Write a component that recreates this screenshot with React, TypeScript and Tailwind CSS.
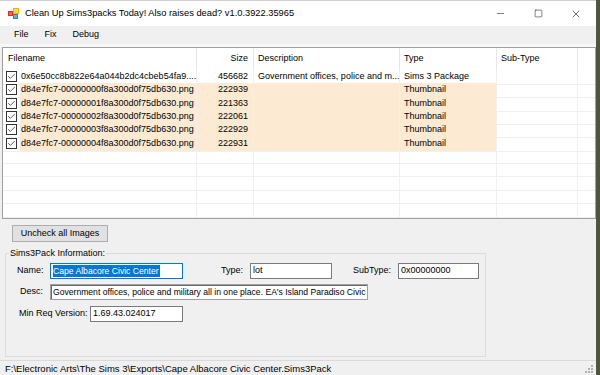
import { Check, Minus, Square, X } from 'lucide-react';

interface FileRow {
  name: string;
  size: string;
  desc: string;
  type: string;
  thumb: boolean;
}

const rows: FileRow[] = [
  { name: '0x6e50cc8b822e64a044b2dc4cbeb54fa9....', size: '456682', desc: 'Government offices, police and m...', type: 'Sims 3 Package', thumb: false },
  { name: 'd84e7fc7-00000000f8a300d0f75db630.png', size: '222939', desc: '', type: 'Thumbnail', thumb: true },
  { name: 'd84e7fc7-00000001f8a300d0f75db630.png', size: '221363', desc: '', type: 'Thumbnail', thumb: true },
  { name: 'd84e7fc7-00000002f8a300d0f75db630.png', size: '222061', desc: '', type: 'Thumbnail', thumb: true },
  { name: 'd84e7fc7-00000003f8a300d0f75db630.png', size: '222929', desc: '', type: 'Thumbnail', thumb: true },
  { name: 'd84e7fc7-00000004f8a300d0f75db630.png', size: '222931', desc: '', type: 'Thumbnail', thumb: true },
];

const grid = 'grid grid-cols-[17px_177px_57px_146px_97px_81px_1fr]';

const AppIcon = () => (
  <svg width="11" height="11" viewBox="0 0 11 11">
    <rect x="5" y="0" width="6" height="6" fill="#f5b300" />
    <rect x="6" y="1" width="4" height="4" fill="#ffd64a" />
    <rect x="0" y="3" width="5" height="5" fill="#d9342b" />
    <rect x="1" y="4" width="3" height="3" fill="#f0643a" />
    <rect x="5" y="6" width="5" height="5" fill="#3b7fd0" />
    <rect x="6" y="7" width="3" height="3" fill="#6fa8e8" />
  </svg>
);

const CheckBox = () => (
  <div className="w-[11px] h-[11px] border border-[#333] bg-white flex items-center justify-center">
    <Check size={9} strokeWidth={2} color="#222" />
  </div>
);

const TextBox = ({ width, children, focused = false, sunken = false }: { width: string; children: React.ReactNode; focused?: boolean; sunken?: boolean }) => (
  <div
    className={`${width} h-[16px] bg-white flex items-center pl-[2px] overflow-hidden whitespace-nowrap ${
      focused ? 'border border-[#0078d7]' : sunken ? 'border border-[#a0a0a0] shadow-[inset_1px_1px_0_#696969]' : 'border border-[#7a7a7a]'
    }`}
  >
    {children}
  </div>
);

const App = () => {
  return (
    <div className="w-[600px] h-[375px] flex bg-[#3f4a2a] text-[9px] text-black" style={{ fontFamily: '"Liberation Sans", Arial, sans-serif' }}>
      <div className="w-[597px] h-full flex flex-col bg-[#f0f0f0] border-r border-[#555]">
        {/* Title bar */}
        <div className="h-[26px] bg-white flex items-center border-t border-[#cfcfcf] shrink-0">
          <div className="ml-[8px] mr-[6px] flex items-center">
            <AppIcon />
          </div>
          <span className="text-[9.3px]">Clean Up Sims3packs Today! Also raises dead? v1.0.3922.35965</span>
          <div className="ml-auto flex h-full pr-[1px]">
            <div className="w-[37px] flex items-center justify-center">
              <Minus size={11} strokeWidth={1.1} />
            </div>
            <div className="w-[38px] flex items-center justify-center">
              <Square size={9} strokeWidth={1.3} />
            </div>
            <div className="w-[38px] flex items-center justify-center">
              <X size={12} strokeWidth={1.1} />
            </div>
          </div>
        </div>

        {/* Menu */}
        <div className="h-[18px] flex items-center pl-[14px] gap-[16px] shrink-0">
          <span>File</span>
          <span>Fix</span>
          <span>Debug</span>
        </div>
        <div className="h-[3px] bg-[#f7f7f7] shrink-0" />

        {/* List view */}
        <div className="h-[172px] ml-[2px] border border-[#a0a0a0] bg-white overflow-hidden shrink-0">
          <div className={`${grid} h-[22px] items-center`}>
            <div className="col-span-2 h-full flex items-center pl-[5px] border-r border-[#e5e5e5]">Filename</div>
            <div className="h-full flex items-center justify-end pr-[5px] border-r border-[#e5e5e5]">Size</div>
            <div className="h-full flex items-center pl-[4px] border-r border-[#e5e5e5]">Description</div>
            <div className="h-full flex items-center pl-[4px] border-r border-[#e5e5e5]">Type</div>
            <div className="h-full flex items-center pl-[4px] border-r border-[#e5e5e5]">Sub-Type</div>
            <div />
          </div>
          {rows.map((r, i) => (
            <div key={i} className={`${grid} ${i % 3 === 1 ? 'h-[14px]' : 'h-[13px]'} whitespace-nowrap`}>
              <div className="flex items-center pl-[3px] border-b border-[#f0f0f0]">
                <CheckBox />
              </div>
              <div className={`flex items-center pl-[1px] border-b border-r border-[#f0f0f0] overflow-hidden ${r.thumb ? 'bg-[#fdead3]' : ''}`}>{r.name}</div>
              <div className={`flex items-center justify-end pr-[5px] border-b border-r border-[#f0f0f0] ${r.thumb ? 'bg-[#fdead3]' : ''}`}>{r.size}</div>
              <div className={`flex items-center pl-[4px] border-b border-r border-[#f0f0f0] overflow-hidden ${r.thumb ? 'bg-[#fdead3]' : ''}`}>{r.desc}</div>
              <div className={`flex items-center pl-[4px] border-b border-r border-[#f0f0f0] ${r.thumb ? 'bg-[#fdead3]' : ''}`}>{r.type}</div>
              <div className="border-b border-r border-[#f0f0f0]" />
              <div className="border-b border-[#f0f0f0]" />
            </div>
          ))}
          {[0, 1, 2, 3, 4].map((i) => (
            <div key={i} className={`${grid} h-[13.6px]`}>
              <div className="border-b border-[#f0f0f0]" />
              <div className="border-b border-r border-[#f0f0f0]" />
              <div className="border-b border-r border-[#f0f0f0]" />
              <div className="border-b border-r border-[#f0f0f0]" />
              <div className="border-b border-r border-[#f0f0f0]" />
              <div className="border-b border-r border-[#f0f0f0]" />
              <div className="border-b border-[#f0f0f0]" />
            </div>
          ))}
        </div>

        {/* Bottom panel */}
        <div className="flex-1 flex flex-col">
          <button className="ml-[12px] mt-[6px] w-[96px] h-[17px] bg-[#e1e1e1] border border-[#adadad] text-[9px] flex items-center justify-center">
            Uncheck all Images
          </button>
          <fieldset className="ml-[5px] mt-[6px] w-[481px] h-[109px] border border-[#dcdcdc]">
            <legend className="ml-[3px] px-[1px] leading-[11px]">Sims3Pack Information:</legend>
            <div className="flex items-center mt-[4px]">
              <span className="ml-[11px] w-[33px]">Name:</span>
              <TextBox width="w-[133px]" focused>
                <span className="bg-[#0078d7] text-white text-[8.6px] pr-[1px]">Cape Albacore Civic Center</span>
              </TextBox>
              <span className="ml-[38px] w-[29px]">Type:</span>
              <TextBox width="w-[82px]">lot</TextBox>
              <span className="ml-[21px] w-[45px]">SubType:</span>
              <TextBox width="w-[81px]">0x00000000</TextBox>
            </div>
            <div className="flex items-center mt-[5px]">
              <span className="ml-[14px] w-[30px]">Desc:</span>
              <TextBox width="w-[318px]" sunken>
                <span className="text-[8.6px]">Government offices, police and military all in one place. EA's Island Paradiso Civic Center</span>
              </TextBox>
            </div>
            <div className="flex items-center mt-[6px]">
              <span className="ml-[13px] w-[71px]">Min Req Version:</span>
              <TextBox width="w-[93px]">1.69.43.024017</TextBox>
            </div>
          </fieldset>
        </div>

        {/* Status bar */}
        <div className="h-[15px] border-t border-[#dadada] flex items-center pl-[5px] pt-[2px] shrink-0 relative">
          <span className="text-[9.5px]">F:\Electronic Arts\The Sims 3\Exports\Cape Albacore Civic Center.Sims3Pack</span>
          <div className="absolute right-[3px] bottom-[2px] grid grid-cols-3 gap-[1px]">
            <span />
            <span />
            <span className="w-[2px] h-[2px] bg-[#b0b0b0]" />
            <span />
            <span className="w-[2px] h-[2px] bg-[#b0b0b0]" />
            <span className="w-[2px] h-[2px] bg-[#b0b0b0]" />
            <span className="w-[2px] h-[2px] bg-[#b0b0b0]" />
            <span className="w-[2px] h-[2px] bg-[#b0b0b0]" />
            <span className="w-[2px] h-[2px] bg-[#b0b0b0]" />
          </div>
        </div>
      </div>
      <div className="flex-1 bg-[#4a5a2c]" />
    </div>
  );
};

export default App;
